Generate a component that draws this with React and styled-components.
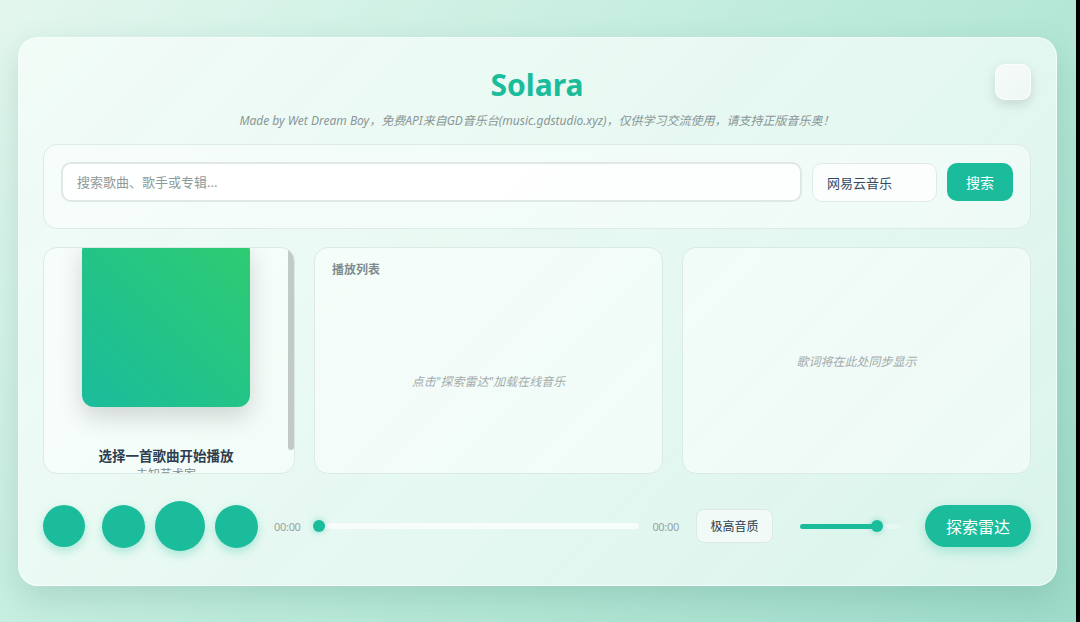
import React, { useState } from "react";
import styled, { createGlobalStyle } from "styled-components";

const Global = createGlobalStyle`
  html, body { margin: 0; padding: 0; }
  body {
    width: 1080px;
    height: 622px;
    overflow: hidden;
    font-family: "Noto Sans", "Noto Sans CJK SC", sans-serif;
    background: #000;
  }
  * { box-sizing: border-box; }
`;

const Page = styled.div`
  width: 1076px;
  height: 622px;
  padding: 37px 19px 0 18px;
  background: linear-gradient(135deg, #e4f7ef 0%, #bdebdb 50%, #9edbca 100%);
`;

const Card = styled.main`
  display: flex;
  flex-direction: column;
  width: 1039px;
  padding: 25px 25px 34px 24px;
  border-radius: 20px;
  background: linear-gradient(135deg, rgba(243, 252, 248, 0.92) 0%, rgba(226, 247, 240, 0.88) 100%);
  border: 1px solid rgba(255, 255, 255, 0.6);
  box-shadow: 0 12px 32px rgba(40, 110, 90, 0.18);
`;

const Header = styled.header`
  display: grid;
  grid-template-columns: 1fr auto 1fr;
  align-items: start;
`;

const Title = styled.h1`
  grid-column: 2;
  margin: 0;
  font-size: 30px;
  line-height: 44px;
  font-weight: 700;
  color: #1abc9c;
`;

const ThemeButton = styled.button`
  grid-column: 3;
  justify-self: end;
  margin-top: 1px;
  width: 36px;
  height: 36px;
  border-radius: 10px;
  border: 1px solid rgba(255, 255, 255, 0.8);
  background: linear-gradient(135deg, #f6fbfa, #eef7f4);
  box-shadow: 0 4px 12px rgba(0, 0, 0, 0.13);
  padding: 0;
`;

const Subtitle = styled.p`
  margin: 6px 0 0;
  text-align: center;
  font-size: 12px;
  line-height: 16px;
  font-style: italic;
  color: #8a9696;
`;

const SearchCard = styled.section`
  margin-top: 15px;
  display: flex;
  gap: 10px;
  padding: 17px 17px 26px;
  border-radius: 14px;
  background: rgba(255, 255, 255, 0.45);
  border: 1px solid #dcebe5;
`;

const SearchInput = styled.input`
  flex: 1;
  height: 40px;
  padding: 0 14px;
  border-radius: 10px;
  border: 2px solid #dfe8e5;
  background: rgba(255, 255, 255, 0.85);
  font-family: inherit;
  font-size: 13px;
  color: #2c3e50;
  outline: none;
  &::placeholder { color: #8f9a9a; }
`;

const SourceSelect = styled.div`
  width: 125px;
  height: 39px;
  margin-top: 1px;
  display: flex;
  align-items: center;
  padding: 0 14px;
  border-radius: 10px;
  border: 1px solid #e0ebe7;
  background: rgba(255, 255, 255, 0.8);
  font-size: 13px;
  color: #34495e;
`;

const SearchButton = styled.button`
  width: 66px;
  height: 38px;
  margin-top: 1px;
  border: none;
  border-radius: 10px;
  background: #1abc9c;
  color: #fff;
  font-family: inherit;
  font-size: 14px;
`;

const Panels = styled.section`
  margin-top: 18px;
  display: grid;
  grid-template-columns: 252px 1fr 1fr;
  gap: 19px;
  height: 227px;
`;

const Panel = styled.div`
  border-radius: 14px;
  border: 1px solid #d9ebe4;
  background: rgba(255, 255, 255, 0.5);
  display: flex;
  flex-direction: column;
  overflow: hidden;
`;

const NowPlayingFrame = styled(Panel)`
  position: relative;
`;

const NowPlayingScroll = styled.div`
  flex: 1;
  min-height: 0;
  display: flex;
  flex-direction: column;
  align-items: center;
  justify-content: center;
  padding: 20px 26px 20px 20px;
  overflow-y: auto;
  scrollbar-width: none;
  &::-webkit-scrollbar { display: none; }
`;

const ScrollThumb = styled.span`
  position: absolute;
  top: 0;
  right: 0;
  width: 6px;
  height: 202px;
  border-radius: 3px;
  background: #c3c9c7;
`;

const Cover = styled.div`
  flex: none;
  width: 168px;
  height: 168px;
  border-radius: 12px;
  background: linear-gradient(45deg, #1abc9c 0%, #2ecc71 100%);
  box-shadow: 0 10px 24px rgba(0, 0, 0, 0.16);
  margin-bottom: 39px;
`;

const SongTitle = styled.div`
  flex: none;
  font-size: 13.5px;
  line-height: 20px;
  font-weight: 700;
  color: #2c3e50;
`;

const SongArtist = styled.div`
  flex: none;
  font-size: 12px;
  line-height: 17px;
  color: #7f8c8d;
`;

const ListPanel = styled(Panel)`
  padding: 14px 17px 0;
`;

const PanelHeading = styled.div`
  font-size: 12px;
  line-height: 16px;
  font-weight: 700;
  color: #7f8c8d;
  margin-bottom: 10px;
`;

const Empty = styled.div`
  flex: 1;
  display: flex;
  align-items: center;
  justify-content: center;
  font-size: 12px;
  font-style: italic;
  color: #a3acac;
`;

const LyricsPanel = styled(Panel)`
  align-items: center;
  justify-content: center;
`;

const Controls = styled.section`
  margin-top: 27px;
  height: 50px;
  display: flex;
  align-items: center;
`;

const RoundButton = styled.button`
  flex: none;
  width: ${(p) => p.$size}px;
  height: ${(p) => p.$size}px;
  border-radius: 50%;
  border: none;
  padding: 0;
  background: #1abc9c;
  box-shadow: 0 4px 10px rgba(26, 188, 156, 0.3);
  margin-right: ${(p) => p.$mr || 0}px;
`;

const TransportGroup = styled.div`
  display: flex;
  align-items: center;
  gap: 10px;
`;

const Time = styled.span`
  flex: none;
  font-size: 11px;
  color: #95a3a3;
  margin: ${(p) => p.$m};
  letter-spacing: -0.3px;
`;

const Progress = styled.div`
  position: relative;
  flex: 1;
  height: 6px;
  border-radius: 3px;
  background: rgba(255, 255, 255, 0.7);
`;

const Knob = styled.span`
  position: absolute;
  top: 50%;
  left: ${(p) => p.$left};
  width: 12px;
  height: 12px;
  margin-top: -6px;
  margin-left: -6px;
  border-radius: 50%;
  background: #1abc9c;
  box-shadow: 0 0 6px rgba(26, 188, 156, 0.45);
`;

const QualityButton = styled.button`
  flex: none;
  margin-left: 17px;
  width: 77px;
  height: 34px;
  border-radius: 8px;
  border: 1px solid #dce9e5;
  background: #f1faf7;
  font-family: inherit;
  font-size: 12px;
  color: #2c3e50;
`;

const Volume = styled.div`
  position: relative;
  flex: none;
  width: 100px;
  height: 5px;
  margin-left: 27px;
  border-radius: 3px;
  background: rgba(255, 255, 255, 0.35);
`;

const VolumeFill = styled.div`
  height: 100%;
  border-radius: 3px;
  background: #1abc9c;
`;

const ExploreButton = styled.button`
  flex: none;
  margin-left: 25px;
  width: 106px;
  height: 42px;
  border-radius: 21px;
  border: none;
  background: #1abc9c;
  color: #fff;
  font-family: inherit;
  font-size: 16px;
  box-shadow: 0 4px 12px rgba(26, 188, 156, 0.3);
`;

export default function App() {
  const [query, setQuery] = useState("");
  const volume = 77;
  return (
    <>
      <Global />
      <Page>
        <Card>
          <Header>
            <Title>Solara</Title>
            <ThemeButton aria-label="切换主题" />
          </Header>
          <Subtitle>
            Made by Wet Dream Boy，免费API来自GD音乐台(music.gdstudio.xyz)，仅供学习交流使用，请支持正版音乐奥！
          </Subtitle>
          <SearchCard>
            <SearchInput
              value={query}
              onChange={(e) => setQuery(e.target.value)}
              placeholder="搜索歌曲、歌手或专辑..."
            />
            <SourceSelect>网易云音乐</SourceSelect>
            <SearchButton>搜索</SearchButton>
          </SearchCard>
          <Panels>
            <NowPlayingFrame>
              <NowPlayingScroll>
                <Cover />
                <SongTitle>选择一首歌曲开始播放</SongTitle>
                <SongArtist>未知艺术家</SongArtist>
              </NowPlayingScroll>
              <ScrollThumb />
            </NowPlayingFrame>
            <ListPanel>
              <PanelHeading>播放列表</PanelHeading>
              <Empty>点击"探索雷达"加载在线音乐</Empty>
            </ListPanel>
            <LyricsPanel>
              <Empty>歌词将在此处同步显示</Empty>
            </LyricsPanel>
          </Panels>
          <Controls>
            <RoundButton $size={42} $mr={17} aria-label="播放模式" />
            <TransportGroup>
              <RoundButton $size={43} aria-label="上一首" />
              <RoundButton $size={50} aria-label="播放" />
              <RoundButton $size={43} aria-label="下一首" />
            </TransportGroup>
            <Time $m="0 10px 0 16px">00:00</Time>
            <Progress>
              <Knob $left="8px" />
            </Progress>
            <Time $m="0 0 0 13px">00:00</Time>
            <QualityButton>极高音质</QualityButton>
            <Volume>
              <VolumeFill style={{ width: `${volume}%` }} />
              <Knob $left={`${volume}%`} />
            </Volume>
            <ExploreButton>探索雷达</ExploreButton>
          </Controls>
        </Card>
      </Page>
    </>
  );
}
